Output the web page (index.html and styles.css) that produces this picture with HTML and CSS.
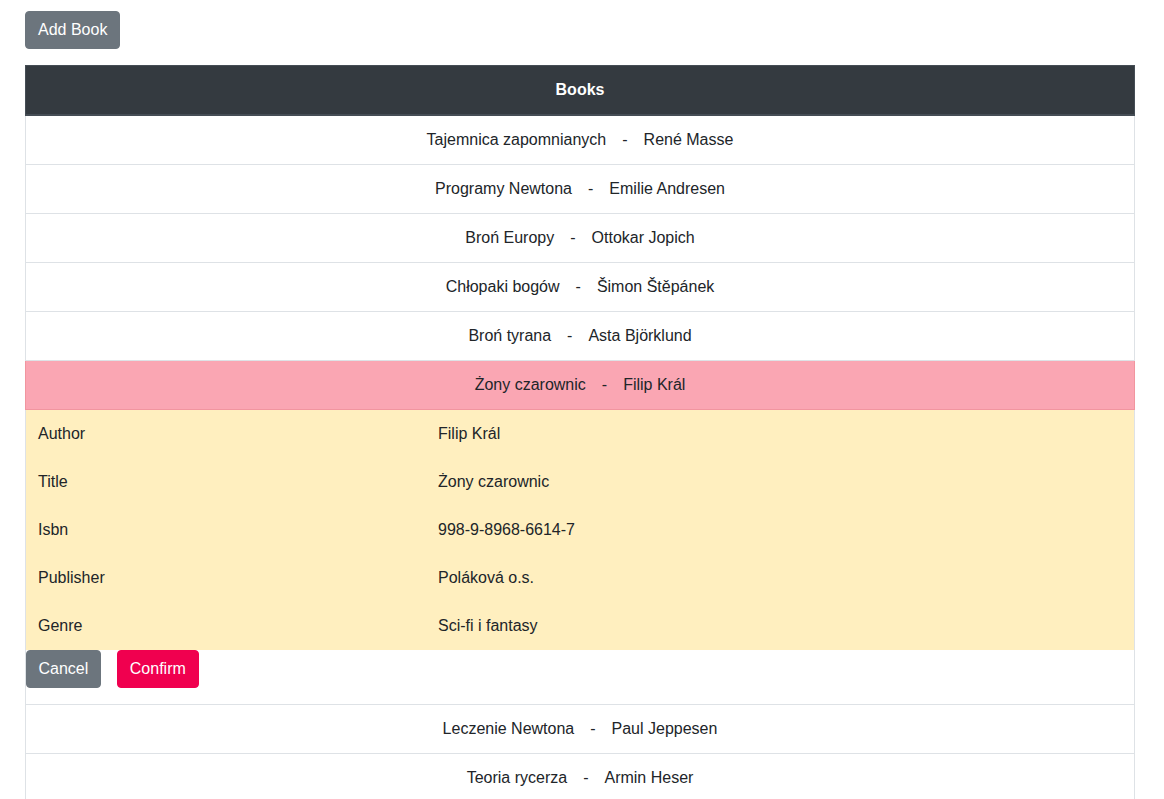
FILE: index.html
```html
<!DOCTYPE html>
<html>
<head>
<meta charset="utf-8">
<link rel="stylesheet" href="styles.css">
</head>
<body>
<div class="page">
  <button class="btn btn-secondary">Add Book</button>
  <table class="books">
    <thead>
      <tr><th>Books</th></tr>
    </thead>
    <tbody>
      <tr><td><span>Tajemnica zapomnianych</span><span class="sep">-</span><span>René Masse</span></td></tr>
      <tr><td><span>Programy Newtona</span><span class="sep">-</span><span>Emilie Andresen</span></td></tr>
      <tr><td><span>Broń Europy</span><span class="sep">-</span><span>Ottokar Jopich</span></td></tr>
      <tr><td><span>Chłopaki bogów</span><span class="sep">-</span><span>Šimon Štěpánek</span></td></tr>
      <tr><td><span>Broń tyrana</span><span class="sep">-</span><span>Asta Björklund</span></td></tr>
      <tr class="selected"><td><span>Żony czarownic</span><span class="sep">-</span><span>Filip Král</span></td></tr>
      <tr class="details-row">
        <td>
          <table class="details">
            <tr><td class="label">Author</td><td>Filip Král</td></tr>
            <tr><td class="label">Title</td><td>Żony czarownic</td></tr>
            <tr><td class="label">Isbn</td><td>998-9-8968-6614-7</td></tr>
            <tr><td class="label">Publisher</td><td>Poláková o.s.</td></tr>
            <tr><td class="label">Genre</td><td>Sci-fi i fantasy</td></tr>
          </table>
          <div class="actions">
            <button class="btn btn-secondary btn-cancel">Cancel</button>
            <button class="btn btn-confirm">Confirm</button>
          </div>
        </td>
      </tr>
      <tr><td><span>Leczenie Newtona</span><span class="sep">-</span><span>Paul Jeppesen</span></td></tr>
      <tr><td><span>Teoria rycerza</span><span class="sep">-</span><span>Armin Heser</span></td></tr>
    </tbody>
  </table>
</div>
</body>
</html>
```

FILE: styles.css
```css
html, body {
  margin: 0;
  padding: 0;
  background: #fff;
}
body {
  font-family: "Liberation Sans", Arial, sans-serif;
  font-size: 16px;
  line-height: 24px;
  color: #212529;
}
.page {
  width: 1110px;
  margin-left: 25px;
  padding-top: 11px;
}
.btn {
  display: inline-block;
  font-family: inherit;
  font-size: 16px;
  line-height: 24px;
  padding: 6px 12px;
  border: 1px solid transparent;
  border-radius: 4px;
  color: #fff;
  cursor: pointer;
}
.btn-secondary {
  background: #6c757d;
  border-color: #6c757d;
}
.btn-confirm {
  background: #f0004f;
  border-color: #f0004f;
}
.btn-cancel {
  padding: 6px 11.5px;
}
.books {
  width: 1110px;
  margin-top: 16px;
  border-collapse: collapse;
  table-layout: fixed;
}
.books th {
  background: #343a40;
  color: #fff;
  font-weight: bold;
  padding: 12px;
  text-align: center;
  border: 1px solid #454d55;
  border-bottom-width: 2px;
}
.books > tbody > tr > td {
  padding: 12px;
  text-align: center;
  border: 1px solid #dee2e6;
}
.sep {
  margin: 0 16px;
}
.books > tbody > tr.selected > td {
  background: #faa6b3;
  border-color: #f1959f;
}
.books > tbody > tr.details-row > td {
  padding: 0;
  text-align: left;
}
.details {
  width: 100%;
  border-collapse: collapse;
  background: #ffefbf;
}
.details td {
  padding: 12px;
  height: 24px;
}
.details td.label {
  width: 376px;
}
.actions {
  display: flex;
  gap: 16px;
  padding-bottom: 16px;
}
```
